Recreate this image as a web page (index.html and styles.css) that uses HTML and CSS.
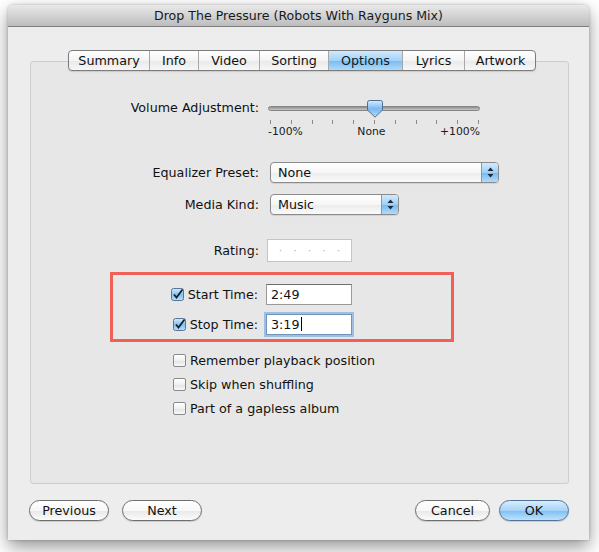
FILE: index.html
```html
<!DOCTYPE html>
<html>
<head>
<meta charset="utf-8">
<link rel="stylesheet" href="styles.css">
</head>
<body>
<div class="window">
  <div class="titlebar">Drop The Pressure (Robots With Rayguns Mix)</div>
  <div class="body">
    <div class="tabs">
      <div class="tab">Summary</div>
      <div class="tab">Info</div>
      <div class="tab">Video</div>
      <div class="tab">Sorting</div>
      <div class="tab selected">Options</div>
      <div class="tab">Lyrics</div>
      <div class="tab">Artwork</div>
    </div>
    <div class="group">
      <div class="row vol">
        <div class="label">Volume Adjustment:</div>
        <div class="slider">
          <div class="track">
            <svg class="thumb" width="16" height="18" viewBox="0 0 16 18">
              <defs>
                <linearGradient id="tg" x1="0" y1="0" x2="0" y2="1">
                  <stop offset="0" stop-color="#d9ecfc"/>
                  <stop offset="0.5" stop-color="#78b8f0"/>
                  <stop offset="1" stop-color="#b7dcf8"/>
                </linearGradient>
              </defs>
              <path d="M2.5,0.5 H13.5 Q15.5,0.5 15.5,2.5 V10 L8,17.2 L0.5,10 V2.5 Q0.5,0.5 2.5,0.5 Z" fill="url(#tg)" stroke="#4d6e92" stroke-width="1"/>
            </svg>
          </div>
          <div class="ticks">
            <span></span><span></span><span></span><span></span><span></span><span></span><span></span><span></span><span></span><span></span><span></span>
          </div>
          <div class="scale">
            <span>-100%</span><span>None</span><span>+100%</span>
          </div>
        </div>
      </div>
      <div class="row eq">
        <div class="label">Equalizer Preset:</div>
        <div class="popup wide">
          <span class="ptext">None</span>
          <span class="arrows">
            <svg width="7" height="11" viewBox="0 0 7 11"><path d="M3.5,0.5 L6.5,4 H0.5 Z" fill="#1d2a3a"/><path d="M3.5,10.5 L6.5,7 H0.5 Z" fill="#1d2a3a"/></svg>
          </span>
        </div>
      </div>
      <div class="row kind">
        <div class="label">Media Kind:</div>
        <div class="popup narrow">
          <span class="ptext">Music</span>
          <span class="arrows">
            <svg width="7" height="11" viewBox="0 0 7 11"><path d="M3.5,0.5 L6.5,4 H0.5 Z" fill="#1d2a3a"/><path d="M3.5,10.5 L6.5,7 H0.5 Z" fill="#1d2a3a"/></svg>
          </span>
        </div>
      </div>
      <div class="row rating">
        <div class="label">Rating:</div>
        <div class="ratebox"><span>·</span><span>·</span><span>·</span><span>·</span><span>·</span></div>
      </div>
      <div class="highlight">
        <div class="times">
          <div class="tlabel">
            <svg class="cb" width="13" height="13" viewBox="0 0 13 13">
              <defs>
                <linearGradient id="cg" x1="0" y1="0" x2="0" y2="1">
                  <stop offset="0" stop-color="#d6ebfc"/>
                  <stop offset="0.5" stop-color="#86c2f1"/>
                  <stop offset="1" stop-color="#b9ddf8"/>
                </linearGradient>
              </defs>
              <rect x="0.5" y="0.5" width="12" height="12" rx="2" fill="url(#cg)" stroke="#55779b"/>
              <path d="M3,6.5 L5.5,9.5 L11.5,1.5" fill="none" stroke="#17212e" stroke-width="1.8"/>
            </svg>
            <span>Start Time:</span>
          </div>
          <div class="field">2:49</div>
          <div class="tlabel">
            <svg class="cb" width="13" height="13" viewBox="0 0 13 13">
              <rect x="0.5" y="0.5" width="12" height="12" rx="2" fill="url(#cg)" stroke="#55779b"/>
              <path d="M3,6.5 L5.5,9.5 L11.5,1.5" fill="none" stroke="#17212e" stroke-width="1.8"/>
            </svg>
            <span>Stop Time:</span>
          </div>
          <div class="field focus">3:19<span class="caret"></span></div>
        </div>
      </div>
      <div class="checks">
        <div class="check"><span class="box"></span><span>Remember playback position</span></div>
        <div class="check"><span class="box"></span><span>Skip when shuffling</span></div>
        <div class="check"><span class="box"></span><span>Part of a gapless album</span></div>
      </div>
    </div>
    <div class="buttons">
      <div class="btn prev">Previous</div>
      <div class="btn next">Next</div>
      <div class="spacer"></div>
      <div class="btn cancel">Cancel</div>
      <div class="btn ok">OK</div>
    </div>
  </div>
</div>
</body>
</html>
```

FILE: styles.css
```css
* { box-sizing: border-box; }
html, body { margin: 0; padding: 0; }
body {
  background: #ffffff;
  font-family: "DejaVu Sans", sans-serif;
  font-size: 12.7px;
  color: #111;
  width: 599px;
  height: 552px;
  overflow: hidden;
}
.window {
  margin: 5px 0 0 8px;
  width: 581px;
  height: 535px;
  background: #ededed;
  border-radius: 5px 5px 0 0;
  box-shadow: 0 7px 18px rgba(0,0,0,0.42), 0 0 3px rgba(0,0,0,0.25);
  overflow: hidden;
}
.titlebar {
  height: 22px;
  background: linear-gradient(#e9e9e9, #bdbdbd);
  border-bottom: 1px solid #7d7d7d;
  text-align: center;
  line-height: 21px;
  font-size: 12.6px;
  color: #1a1a1a;
}
.body {
  padding: 23px 20px 0 22px;
}
.tabs {
  position: relative;
  z-index: 2;
  display: grid;
  grid-template-columns: 80px 49px 61px 69px 74px 62px 72px;
  width: 468px;
  height: 21px;
  margin-left: 38px;
  margin-bottom: -10px;
  border: 1px solid #7c7c7c;
  border-radius: 4px;
  background: linear-gradient(#ffffff, #f4f4f4 50%, #e9e9e9 51%, #f7f7f7);
  overflow: hidden;
  box-shadow: 0 1px 1px rgba(0,0,0,0.12);
}
.tab {
  text-align: center;
  line-height: 19px;
  border-left: 1px solid #a8a8a8;
  color: #111;
}
.tab:first-child { border-left: none; }
.tab.selected {
  background: linear-gradient(#d0e9fc, #a2d2f8 50%, #76bbf1 51%, #b0daf9);
  color: #0d1a29;
}
.group {
  height: 423px;
  background: #e7e7e7;
  border: 1px solid #cdcdcd;
  border-radius: 3px;
  padding-top: 37px;
}
.row {
  display: grid;
  grid-template-columns: 228px auto;
  column-gap: 9px;
  align-items: center;
}
.label { text-align: right; white-space: nowrap; }
.row.vol { align-items: start; }
.row.vol .label { line-height: 18px; }
.slider {
  width: 212px;
  height: 39px;
}
.track {
  position: relative;
  margin-top: 7px;
  height: 5px;
  border-radius: 3px;
  background: linear-gradient(#8e8e8e, #c9c9c9);
  border: 1px solid #858585;
}
.thumb {
  position: absolute;
  left: 98px;
  top: -7px;
}
.ticks {
  display: flex;
  justify-content: space-between;
  padding: 0 1px 0 2px;
  margin-top: 9px;
  height: 5px;
}
.ticks span {
  width: 1px;
  height: 4px;
  background: #8a8a8a;
}
.scale {
  display: flex;
  justify-content: space-between;
  font-size: 10.8px;
  line-height: 12px;
  margin-top: 1px;
  color: #1a1a1a;
}
.row.eq { margin-top: 24px; }
.row.kind { margin-top: 11px; }
.popup {
  display: flex;
  height: 21px;
  margin-left: 2px;
  border: 1px solid #8b8b8b;
  border-radius: 4px;
  background: linear-gradient(#ffffff, #f6f6f6 50%, #ebebeb 51%, #fafafa);
  overflow: hidden;
  box-shadow: 0 1px 1px rgba(0,0,0,0.1);
}
.popup.wide { width: 229px; }
.popup.narrow { width: 129px; }
.ptext {
  flex: 1;
  padding-left: 7px;
  line-height: 19px;
}
.arrows {
  width: 17px;
  display: flex;
  align-items: center;
  justify-content: center;
  border-left: 1px solid #7f9bb8;
  background: linear-gradient(#d2eafc, #9fd0f7 50%, #74b9f0 51%, #b3dbf9);
}
.row.rating { margin-top: 24px; }
.ratebox {
  margin-left: -1px;
  width: 85px;
  height: 23px;
  background: #ffffff;
  border: 1px solid #c4c4c4;
  display: flex;
  justify-content: center;
  gap: 11px;
  align-items: center;
  color: #b8b8b8;
  font-size: 11px;
}
.highlight {
  margin-top: 10px;
  margin-left: 79px;
  width: 344px;
  height: 70px;
  border: 3px solid #ef6157;
}
.times {
  display: grid;
  grid-template-columns: 145px 86px;
  column-gap: 8px;
  row-gap: 9px;
  padding-top: 9px;
  align-items: center;
}
.tlabel {
  display: flex;
  justify-content: flex-end;
  align-items: center;
  gap: 4px;
}
.field {
  height: 21px;
  background: #ffffff;
  border: 1px solid #9a9a9a;
  border-top-color: #6d6d6d;
  padding-left: 4px;
  line-height: 19px;
}
.field.focus {
  border-color: #6f93bb;
  box-shadow: 0 0 0 2px #9dbfe3;
}
.caret {
  display: inline-block;
  width: 1px;
  height: 14px;
  background: #000;
  vertical-align: -2px;
  margin-left: 1px;
}
.checks {
  margin-top: 6px;
  margin-left: 142px;
}
.check {
  height: 24px;
  display: flex;
  align-items: center;
  gap: 4px;
}
.box {
  width: 13px;
  height: 13px;
  border: 1px solid #8a8a8a;
  border-radius: 2px;
  background: linear-gradient(#ffffff, #f0f0f0 50%, #e2e2e2 51%, #f8f8f8);
}
.buttons {
  display: flex;
  margin-top: 16px;
  margin-left: -1px;
  height: 21px;
}
.spacer { flex: 1; }
.btn {
  height: 21px;
  border: 1px solid #6e6e6e;
  border-radius: 11px;
  background: linear-gradient(#ffffff, #f7f7f7 50%, #e8e8e8 51%, #fbfbfb);
  text-align: center;
  line-height: 19px;
  box-shadow: 0 1px 1px rgba(0,0,0,0.15);
}
.btn.prev { width: 80px; }
.btn.next { width: 80px; margin-left: 13px; }
.btn.cancel { width: 75px; }
.btn.ok {
  width: 70px;
  margin-left: 9px;
  border-color: #52729a;
  background: linear-gradient(#d8edfd, #a6d4f8 50%, #7dbff2 51%, #bfe2fa);
}
```
